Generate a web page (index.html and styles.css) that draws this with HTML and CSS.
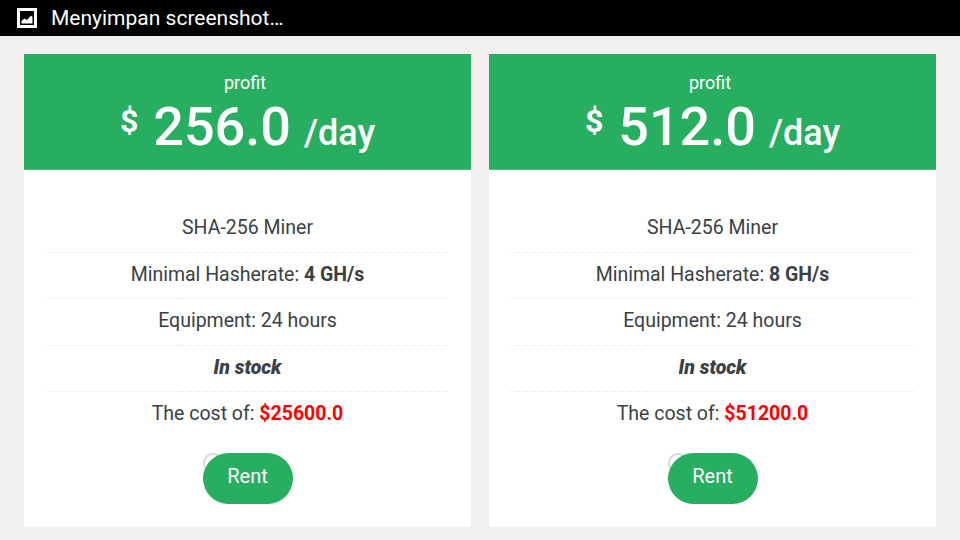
FILE: index.html
```html
<!DOCTYPE html>
<html lang="id">
<head>
<meta charset="utf-8">
<title>Miner plans</title>
<link rel="stylesheet" href="styles.css">
</head>
<body>
<div class="statusbar">
  <svg class="status-icon" width="20" height="20" viewBox="0 0 20 20" aria-hidden="true">
    <path fill="#fff" fill-rule="evenodd" d="M0 0H20V20H0ZM3 3V17H17V3Z"/>
    <path fill="#fff" d="M4.5 15.5V13L7.5 10.5L10 12L14 7.5L15.5 9V15.5Z"/>
  </svg>
  <span class="status-text">Menyimpan screenshot…</span>
</div>
<main class="plans">
  <section class="card">
    <header class="card-head">
      <div class="profit-label">profit</div>
      <div class="price"><span class="currency">$</span><span class="amount">256.0</span><span class="per">/day</span></div>
    </header>
    <ul class="specs">
      <li>SHA-256 Miner</li>
      <li>Minimal Hasherate: <b>4 GH/s</b></li>
      <li>Equipment: 24 hours</li>
      <li><b class="stock">In stock</b></li>
      <li>The cost of: <b class="cost">$25600.0</b></li>
    </ul>
    <div class="actions"><span class="rent-wrap"><span class="radio"></span><a class="rent">Rent</a></span></div>
  </section>
  <section class="card">
    <header class="card-head">
      <div class="profit-label">profit</div>
      <div class="price"><span class="currency">$</span><span class="amount">512.0</span><span class="per">/day</span></div>
    </header>
    <ul class="specs">
      <li>SHA-256 Miner</li>
      <li>Minimal Hasherate: <b>8 GH/s</b></li>
      <li>Equipment: 24 hours</li>
      <li><b class="stock">In stock</b></li>
      <li>The cost of: <b class="cost">$51200.0</b></li>
    </ul>
    <div class="actions"><span class="rent-wrap"><span class="radio"></span><a class="rent">Rent</a></span></div>
  </section>
</main>
</body>
</html>
```
FILE: styles.css
```css
* { box-sizing: border-box; }
html, body { margin: 0; height: 100%; }
body {
  width: 960px;
  height: 540px;
  overflow: hidden;
  background: #f1f0ee;
  font-family: Roboto, "Liberation Sans", sans-serif;
  color: #3a4145;
}
.statusbar {
  height: 36px;
  background: #000;
  color: #fff;
  display: flex;
  align-items: center;
  padding-left: 17px;
}
.status-icon { display: block; flex: none; }
.status-text { margin-left: 14px; font-size: 21px; line-height: 36px; }
.plans {
  display: flex;
  gap: 18px;
  padding: 18px 24px 0;
}
.card {
  width: 447px;
  height: 473px;
  background: #fff;
}
.card-head {
  height: 116px;
  background: #27ae60;
  border-bottom: 1px solid #4cbc7c;
  color: #fff;
  text-align: center;
  padding-top: 19px;
}
.profit-label { font-size: 18px; line-height: 20px; padding-right: 5px; }
.price {
  display: flex;
  justify-content: center;
  align-items: baseline;
  height: 50px;
  line-height: 56px;
  margin-top: 6px;
}
.currency { font-size: 32px; font-weight: 700; position: relative; top: -13px; margin-right: 15px; }
.amount { font-size: 54px; font-weight: 500; margin-right: 13px; }
.per { font-size: 36px; font-weight: 500; }
.specs {
  list-style: none;
  margin: 0 23px 0 22px;
  padding: 36.5px 0 0;
}
.specs li {
  height: 46.4px;
  padding-left: 1px;
  line-height: 43.2px;
  font-size: 19.5px;
  text-align: center;
  background: repeating-linear-gradient(90deg, #e6e6e6 0 1.33px, transparent 1.33px 2.67px) left bottom / 100% 1px no-repeat;
}
.specs li:first-child { line-height: 42px; }
.specs li:last-child { background: none; }
.specs b { font-weight: 700; }
.specs .stock { font-style: italic; font-weight: 900; }
.cost { color: #f00; }
.actions { display: flex; justify-content: center; margin-top: 14.5px; }
.rent-wrap { position: relative; display: block; }
.radio {
  position: absolute;
  left: 0;
  top: 0;
  width: 20px;
  height: 20px;
  border: 2px solid #d8d8d8;
  border-radius: 50%;
  background: #fff;
}
.rent {
  position: relative;
  display: block;
  width: 90px;
  height: 51px;
  line-height: 46px;
  border-radius: 26px;
  background: #27ae60;
  color: #fff;
  font-size: 20px;
  text-align: center;
}
```
